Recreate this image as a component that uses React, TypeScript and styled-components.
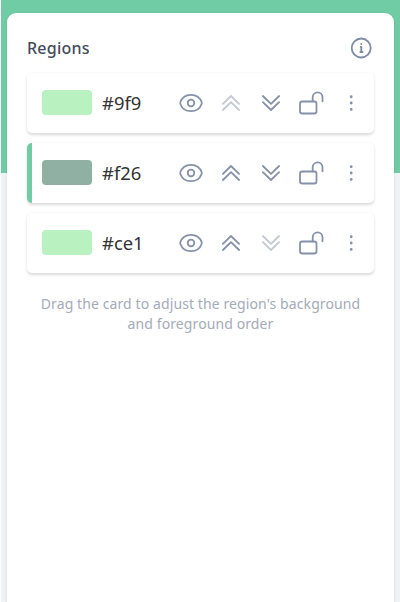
import React from "react";
import styled, { createGlobalStyle } from "styled-components";

const GlobalStyle = createGlobalStyle`
  *, *::before, *::after { box-sizing: border-box; }
  body { margin: 0; background: #fff; overflow: hidden; }
`;

const Page = styled.main`
  height: 602px;
  margin-left: 1px;
  padding: 13px 6px 0;
  background: linear-gradient(#70cca4 173px, #f1f2f4 173px);
  font-family: "Segoe UI", "Noto Sans", sans-serif;
`;

const Panel = styled.section`
  width: 387px;
  height: 589px;
  padding: 20px;
  border-radius: 9px 9px 0 0;
  background: #fff;
  box-shadow: 0 1px 3px rgba(0, 0, 0, 0.13);
`;

const Header = styled.header`
  display: flex;
  align-items: center;
  justify-content: space-between;
  height: 30px;
  margin-bottom: 10px;
  padding-right: 2px;
`;

const Title = styled.h1`
  margin: 0;
  color: #434b5a;
  font-size: 16px;
  line-height: 24px;
  font-weight: 500;
  letter-spacing: 0.25px;
`;

const List = styled.ul`
  display: grid;
  gap: 10px;
  margin: 0;
  padding: 0;
  list-style: none;
`;

const Card = styled.li<{ $selected: boolean }>`
  display: flex;
  align-items: center;
  height: 60px;
  padding: 0 8px 0 10px;
  border-left: 5px solid ${(p) => (p.$selected ? "#70cca4" : "transparent")};
  border-radius: 5px;
  background: #fff;
  box-shadow: 0 1.5px 3px rgba(0, 0, 0, 0.15);
`;

const Swatch = styled.span<{ $color: string }>`
  width: 50px;
  height: 25px;
  margin-bottom: 1px;
  border-radius: 4px;
  background: ${(p) => p.$color};
`;

const Name = styled.span`
  flex: 1;
  margin-left: 10px;
  color: #333;
  font-size: 18.400px;
  line-height: 28px;
`;

const Actions = styled.div`
  display: flex;
  gap: 10px;
`;

const IconButton = styled.button`
  display: grid;
  place-items: center;
  width: 30px;
  height: 30px;
  padding: 0;
  border: 0;
  background: none;
  color: #8491a8;

  &:disabled { color: #c3c9d3; }
`;

const Glyph = styled.svg`
  display: block;
  width: 30px;
  height: 30px;
  fill: none;
  stroke: currentColor;
  stroke-width: 1.8;
  stroke-linecap: round;
  stroke-linejoin: round;
`;

const InfoGlyph = styled(Glyph)`
  width: 22px;
  height: 22px;
  color: #7d8ba4;
`;

const Hint = styled.p`
  margin: 21px 0 0;
  color: #a4abb8;
  font-size: 14px;
  line-height: 20px;
  letter-spacing: 0.1px;
  text-align: center;
`;

const EyeIcon = () => (
  <Glyph viewBox="0 0 30 30">
    <path d="M4.300 15.700Q4 15 4.300 14.300C6 9.500 10 6.800 15 6.800s9 2.700 10.700 7.500q.3.700 0 1.400C24 20.500 20 23.200 15 23.200S6 20.500 4.300 15.700Z" />
    <circle cx="15" cy="15" r="3.300" />
  </Glyph>
);

const UpIcon = () => (
  <Glyph viewBox="0 0 30 30">
    <path d="m6.900 15.800 8.100-7.800 8.100 7.800M6.900 22l8.100-7.800 8.100 7.800" />
  </Glyph>
);

const DownIcon = () => (
  <Glyph viewBox="0 0 30 30">
    <path d="m6.900 8 8.100 7.800L23.100 8M6.900 14.200l8.100 7.800 8.100-7.800" />
  </Glyph>
);

const UnlockIcon = () => (
  <Glyph viewBox="0 0 30 30">
    <rect x="4" y="13.500" width="16.500" height="12" rx="2.300" />
    <path d="M16.700 13.300V9.300a4.900 4.900 0 0 1 9.800 0v4" />
  </Glyph>
);

const MoreIcon = () => (
  <Glyph viewBox="0 0 30 30">
    <path d="M15.200 8.700v.1M15.200 15v.1M15.200 21.300v.1" strokeWidth="2.800" />
  </Glyph>
);

const InfoIcon = () => (
  <InfoGlyph viewBox="0 0 22 22" aria-label="Information">
    <circle cx="11.200" cy="11" r="9.500" />
    <path d="M10.700 9.900h.6v4.700M10.300 15h2.200M11.200 6.900v.2" />
  </InfoGlyph>
);

const regions = [
  { name: "#9f9", color: "#b9f2c0", selected: false },
  { name: "#f26", color: "#91b0a4", selected: true },
  { name: "#ce1", color: "#b9f2c0", selected: false },
];

export default function App() {
  return (
    <>
      <GlobalStyle />
      <Page>
        <Panel>
          <Header>
            <Title>Regions</Title>
            <InfoIcon />
          </Header>
          <List>
            {regions.map((region, index) => (
              <Card key={region.name} $selected={region.selected}>
                <Swatch $color={region.color} />
                <Name>{region.name}</Name>
                <Actions>
                  <IconButton aria-label="Toggle visibility"><EyeIcon /></IconButton>
                  <IconButton aria-label="Move up" disabled={index === 0}><UpIcon /></IconButton>
                  <IconButton aria-label="Move down" disabled={index === regions.length - 1}><DownIcon /></IconButton>
                  <IconButton aria-label="Lock"><UnlockIcon /></IconButton>
                  <IconButton aria-label="More actions"><MoreIcon /></IconButton>
                </Actions>
              </Card>
            ))}
          </List>
          <Hint>
            Drag the card to adjust the region's background
            <br />
            and foreground order
          </Hint>
        </Panel>
      </Page>
    </>
  );
}
